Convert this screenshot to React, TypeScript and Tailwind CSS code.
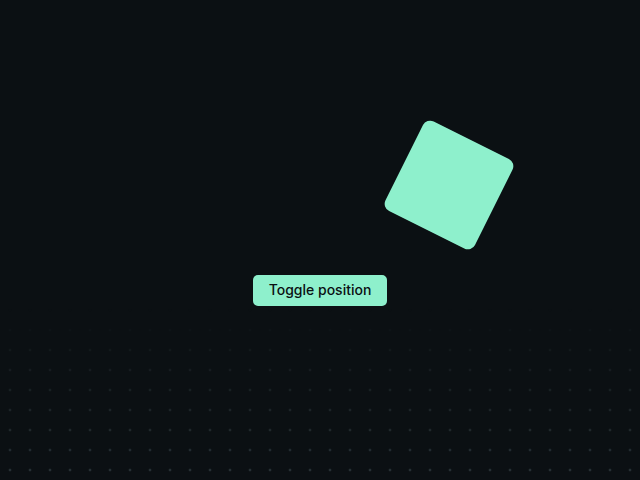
import React from "react";

export default function App() {
  return (
    <div className="relative w-full h-[480px] overflow-hidden bg-[#0b1013]" style={{ fontFamily: "Inter, 'Noto Sans', sans-serif" }}>
      <div className="absolute inset-0 bg-[radial-gradient(circle_at_center,#283236_1.2px,transparent_1.7px)] bg-[length:20px_20px] [mask-image:linear-gradient(to_bottom,transparent_64%,black_100%)]" />
      <div className="absolute left-[399px] top-[135px] w-[100px] h-[100px] rounded-[8px] bg-[#8ef0cc] rotate-[26.5deg]" />
      <div className="relative flex h-full items-center justify-center">
        <button className="mt-[100px] h-[31px] w-[134px] rounded-[5px] bg-[#8ef0cc] text-[14px] font-medium text-[#0b1013] leading-none">
          Toggle position
        </button>
      </div>
    </div>
  );
}
